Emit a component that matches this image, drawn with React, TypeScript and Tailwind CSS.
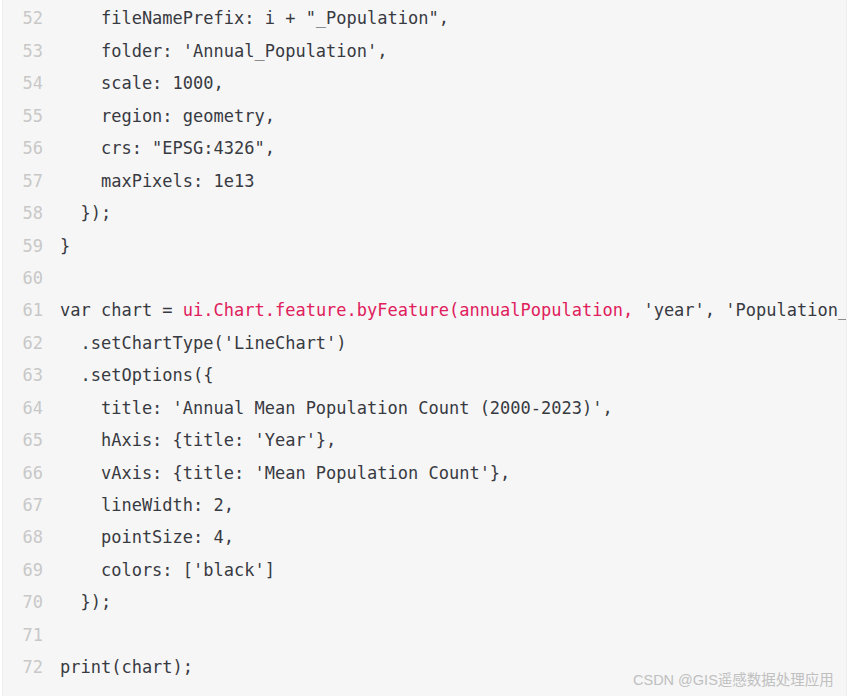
type Tok = { t: string; red?: boolean };

const lines: Tok[][] = [
  [{ t: '    fileNamePrefix: i + "_Population",' }],
  [{ t: "    folder: 'Annual_Population'," }],
  [{ t: "    scale: 1000," }],
  [{ t: "    region: geometry," }],
  [{ t: '    crs: "EPSG:4326",' }],
  [{ t: "    maxPixels: 1e13" }],
  [{ t: "  });" }],
  [{ t: "}" }],
  [{ t: "" }],
  [
    { t: "var chart = " },
    { t: "ui.Chart.feature.byFeature(annualPopulation,", red: true },
    { t: " 'year', 'Population_Count');" },
  ],
  [{ t: "  .setChartType('LineChart')" }],
  [{ t: "  .setOptions({" }],
  [{ t: "    title: 'Annual Mean Population Count (2000-2023)'," }],
  [{ t: "    hAxis: {title: 'Year'}," }],
  [{ t: "    vAxis: {title: 'Mean Population Count'}," }],
  [{ t: "    lineWidth: 2," }],
  [{ t: "    pointSize: 4," }],
  [{ t: "    colors: ['black']" }],
  [{ t: "  });" }],
  [{ t: "" }],
  [{ t: "print(chart);" }],
];

export default function App() {
  return (
    <div className="w-[849px] h-[696px] bg-white overflow-hidden relative">
      <div className="ml-[2px] mr-[2px] h-full bg-[#f6f6f6] border-l border-r border-[#eeeeee] overflow-hidden pt-[3px]">
        {lines.map((line, i) => (
          <div
            key={i}
            className="flex h-[32.45px] items-center whitespace-pre text-[17px] font-['DejaVu_Sans_Mono',monospace]"
          >
            <span className="w-[40px] shrink-0 text-right text-[#c8c8c8]">{52 + i}</span>
            <span className="ml-[17px] text-[#383a42]">
              {line.map((tok, j) => (
                <span key={j} className={tok.red ? "text-[#e0205c]" : ""}>
                  {tok.t}
                </span>
              ))}
            </span>
          </div>
        ))}
      </div>
      <div className="absolute left-[633px] top-[670px] text-[14.5px] text-[#c0c0c0] font-['Liberation_Sans','Noto_Sans_CJK_SC',sans-serif] whitespace-nowrap">
        CSDN @GIS遥感数据处理应用
      </div>
    </div>
  );
}
